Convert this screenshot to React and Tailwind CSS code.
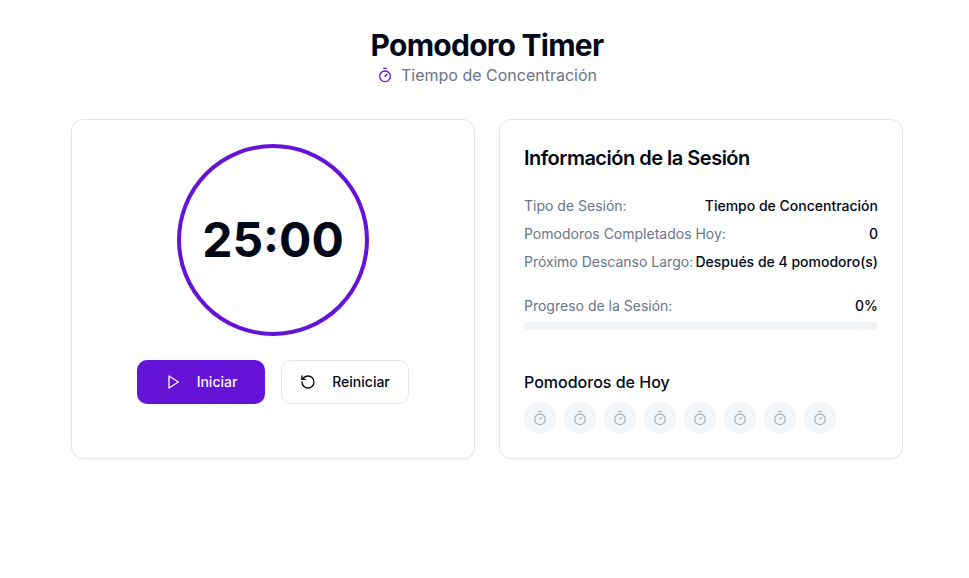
import React from "react";
import { Timer, RotateCcw } from "lucide-react";

const rows = [
  ["Tipo de Sesión:", "Tiempo de Concentración"],
  ["Pomodoros Completados Hoy:", "0"],
  ["Próximo Descanso Largo:", "Después de 4 pomodoro(s)"],
];

function PlayIcon() {
  return (
    <svg width="16" height="16" viewBox="0 0 24 24" fill="none" stroke="currentColor" strokeWidth="2" strokeLinecap="round" strokeLinejoin="round">
      <polygon points="6 3 20 12 6 21 6 3" />
    </svg>
  );
}

function Card({ children, className = "" }) {
  return (
    <section className={`rounded-xl border border-[#e3e7ec] bg-white p-6 shadow-xs ${className}`}>
      {children}
    </section>
  );
}

function InfoRow({ label, value }) {
  return (
    <div className="flex justify-between whitespace-nowrap">
      <span className="text-[#68758a]">{label}</span>
      <span className="font-medium">{value}</span>
    </div>
  );
}

export default function App() {
  return (
    <div className="min-h-screen bg-white pt-[27px] pr-[66px] pl-[71px] font-['Inter',sans-serif] text-[#020817]">
      <header className="flex flex-col items-center">
        <h1 className="text-3xl font-bold tracking-tight">Pomodoro Timer</h1>
        <p className="flex items-center gap-2 text-[#68758a]">
          <Timer size={16} className="text-[#6613d8]" />
          Tiempo de Concentración
        </p>
      </header>
      <main className="mt-8 grid h-[340px] grid-cols-2 gap-6">
        <Card className="flex flex-col items-center gap-6">
          <div className="relative flex size-48 items-center justify-center rounded-full border-4 border-[#6613d8]">
            <Timer size={24} className="absolute text-[#6613d8] opacity-10" />
            <span className="relative text-5xl font-bold">25:00</span>
          </div>
          <div className="flex gap-4">
            <button className="flex h-11 w-32 items-center justify-center gap-4 rounded-[10px] bg-[#6613d8] text-sm font-medium text-slate-50">
              <PlayIcon />
              Iniciar
            </button>
            <button className="flex h-11 w-32 items-center justify-center gap-4 rounded-[10px] border border-[#e3e7ec] bg-white text-sm font-medium">
              <RotateCcw size={16} />
              Reiniciar
            </button>
          </div>
        </Card>
        <Card>
          <h2 className="text-xl font-semibold tracking-tight">Información de la Sesión</h2>
          <div className="mt-6 flex flex-col gap-2 text-sm">
            {rows.map(([label, value]) => (
              <InfoRow key={label} label={label} value={value} />
            ))}
          </div>
          <div className="mt-6 text-sm">
            <InfoRow label="Progreso de la Sesión:" value="0%" />
            <div className="mt-1.5 h-2 rounded-full bg-[#f2f5f8]" />
          </div>
          <h3 className="mt-10 font-medium">Pomodoros de Hoy</h3>
          <div className="mt-2 flex gap-2">
            {Array.from({ length: 8 }, (_, i) => (
              <div key={i} className="flex size-8 items-center justify-center rounded-full bg-[#f2f6f9] text-[#aeb6c1]">
                <Timer size={16} />
              </div>
            ))}
          </div>
        </Card>
      </main>
    </div>
  );
}
